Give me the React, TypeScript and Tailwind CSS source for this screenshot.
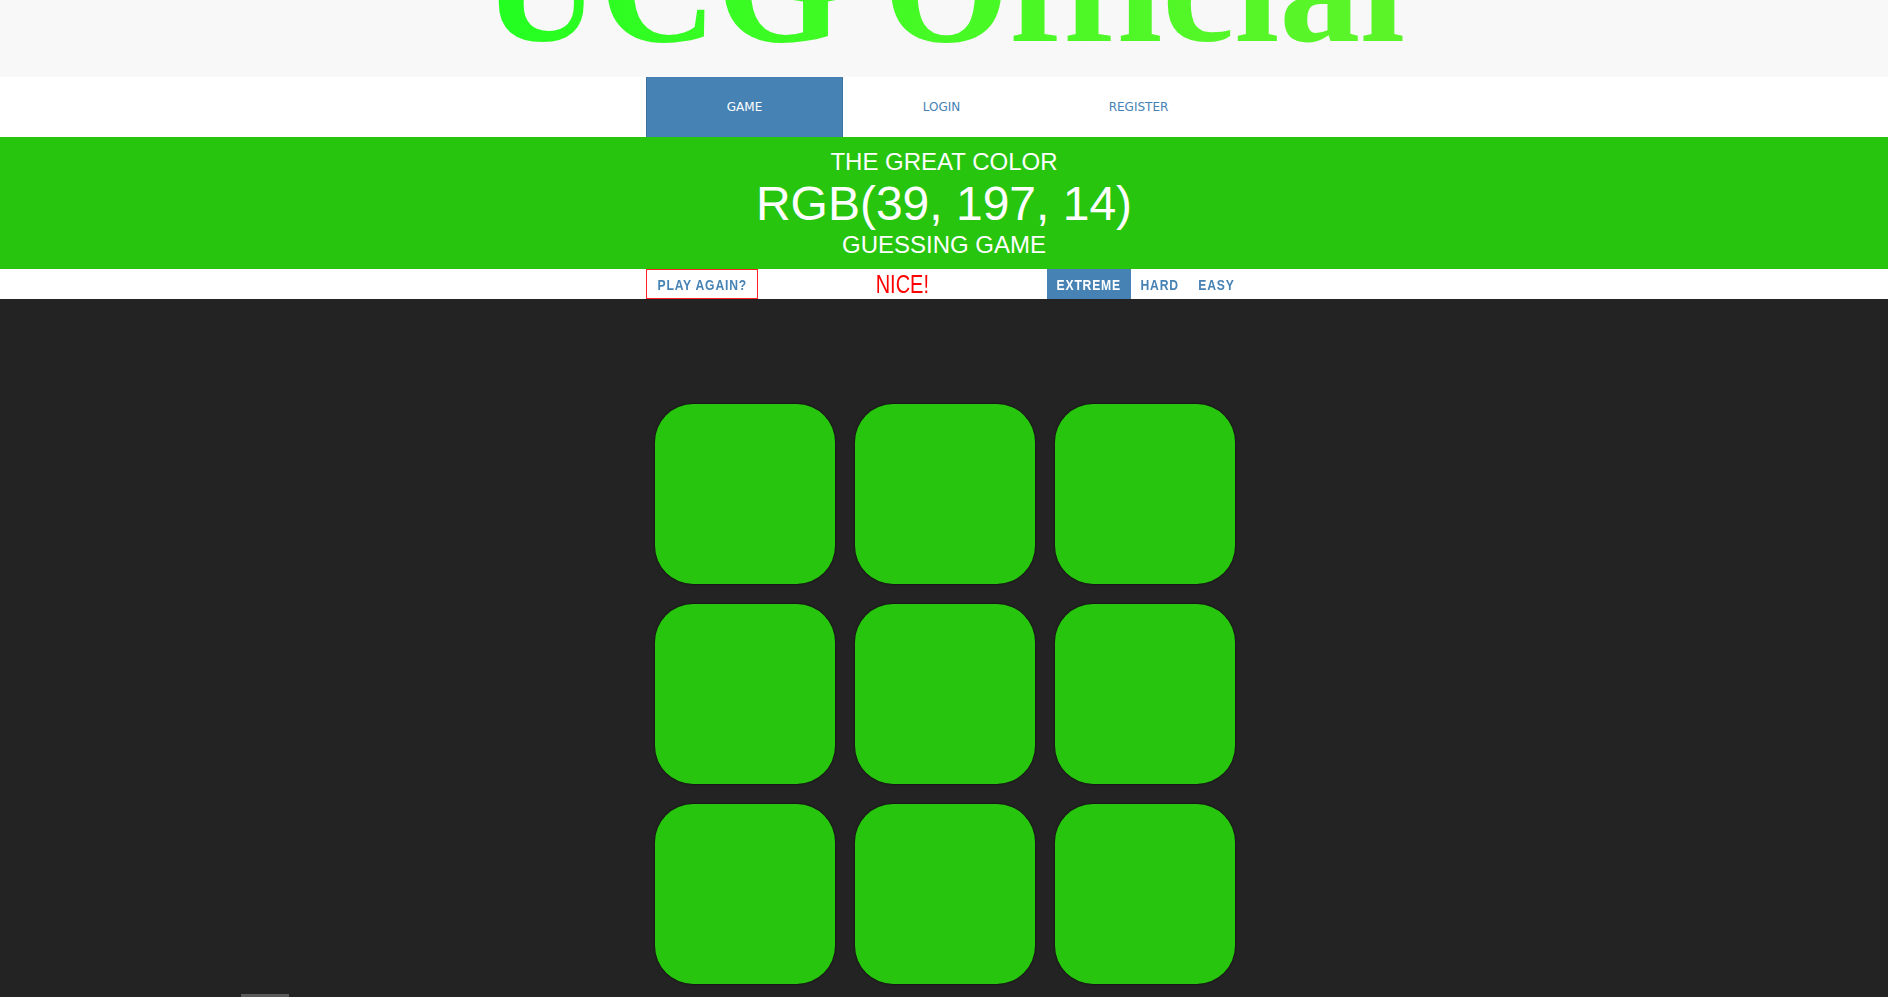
import React from "react";

const squares = Array.from({ length: 9 }, (_, i) => i);

// the stripe font is a condensed sans; squeeze Liberation Sans to match
const squeeze = "inline-block scale-x-[0.81] whitespace-nowrap";

export default function App() {
  return (
    <div className="min-h-screen bg-[#232323] font-['Liberation_Sans',Arial,sans-serif]">
      {/* header title, mostly cut off at the top */}
      <header className="h-[77px] bg-[#f8f8f8] overflow-hidden flex justify-center">
        <h1 className="mt-[-94px] text-[162px] leading-none font-bold whitespace-nowrap font-['Liberation_Serif',serif] bg-linear-to-r from-[#20ff20] to-[#5cf42a] bg-clip-text text-transparent">
          UCG Official
        </h1>
      </header>

      {/* nav */}
      <nav className="bg-white h-[60px] flex justify-center">
        <div className="w-[600px] flex pl-[2px] font-['DejaVu_Sans',sans-serif] text-[12px]">
          <a className="w-[197px] flex items-center justify-center bg-[#4682b4] text-white border-x border-[#3d73a0]">
            GAME
          </a>
          <a className="w-[197px] flex items-center justify-center text-[#4682b4]">
            LOGIN
          </a>
          <a className="w-[197px] flex items-center justify-center text-[#4682b4]">
            REGISTER
          </a>
        </div>
      </nav>

      {/* colour banner */}
      <div className="bg-[#27c50e] text-white text-center pt-[11px] pb-[10px] text-[24px]">
        <div className="leading-[28px]">THE GREAT COLOR</div>
        <div className="text-[48px] leading-[55px]">RGB(39, 197, 14)</div>
        <div className="leading-[28px]">GUESSING GAME</div>
      </div>

      {/* stripe */}
      <div className="bg-white h-[30px]">
        <div className="w-[600px] h-full mx-auto flex pl-[2px] text-[15px] font-bold tracking-[1px] text-[#4682b4]">
          <button className="h-full w-[112px] flex items-center justify-center pt-[2px] border border-[#ff2020]">
            <span className={squeeze}>PLAY AGAIN?</span>
          </button>
          <span className="flex-1 flex items-center justify-center pt-[2px] text-[#ff0000] text-[25px] font-normal tracking-normal">
            <span className="inline-block scale-x-[0.8]">NICE!</span>
          </span>
          <button className="h-full w-[84px] flex items-center justify-center pt-[2px] bg-[#4682b4] text-white">
            <span className={squeeze}>EXTREME</span>
          </button>
          <button className="h-full w-[57px] flex items-center justify-center pt-[2px]">
            <span className={squeeze}>HARD</span>
          </button>
          <button className="h-full w-[56px] flex items-center justify-center pt-[2px]">
            <span className={squeeze}>EASY</span>
          </button>
        </div>
      </div>

      {/* squares */}
      <div className="w-[601px] mx-auto mt-[95px] pl-[1px] flex flex-wrap">
        {squares.map((i) => (
          <div
            key={i}
            className="w-[180px] h-[180px] m-[10px] rounded-[38px] bg-[#27c50e] shadow-[0_0_2px_#000]"
          />
        ))}
      </div>

      <div className="ml-[241px] w-[48px] h-[10px] bg-[#5a5a5a]" />
    </div>
  );
}
